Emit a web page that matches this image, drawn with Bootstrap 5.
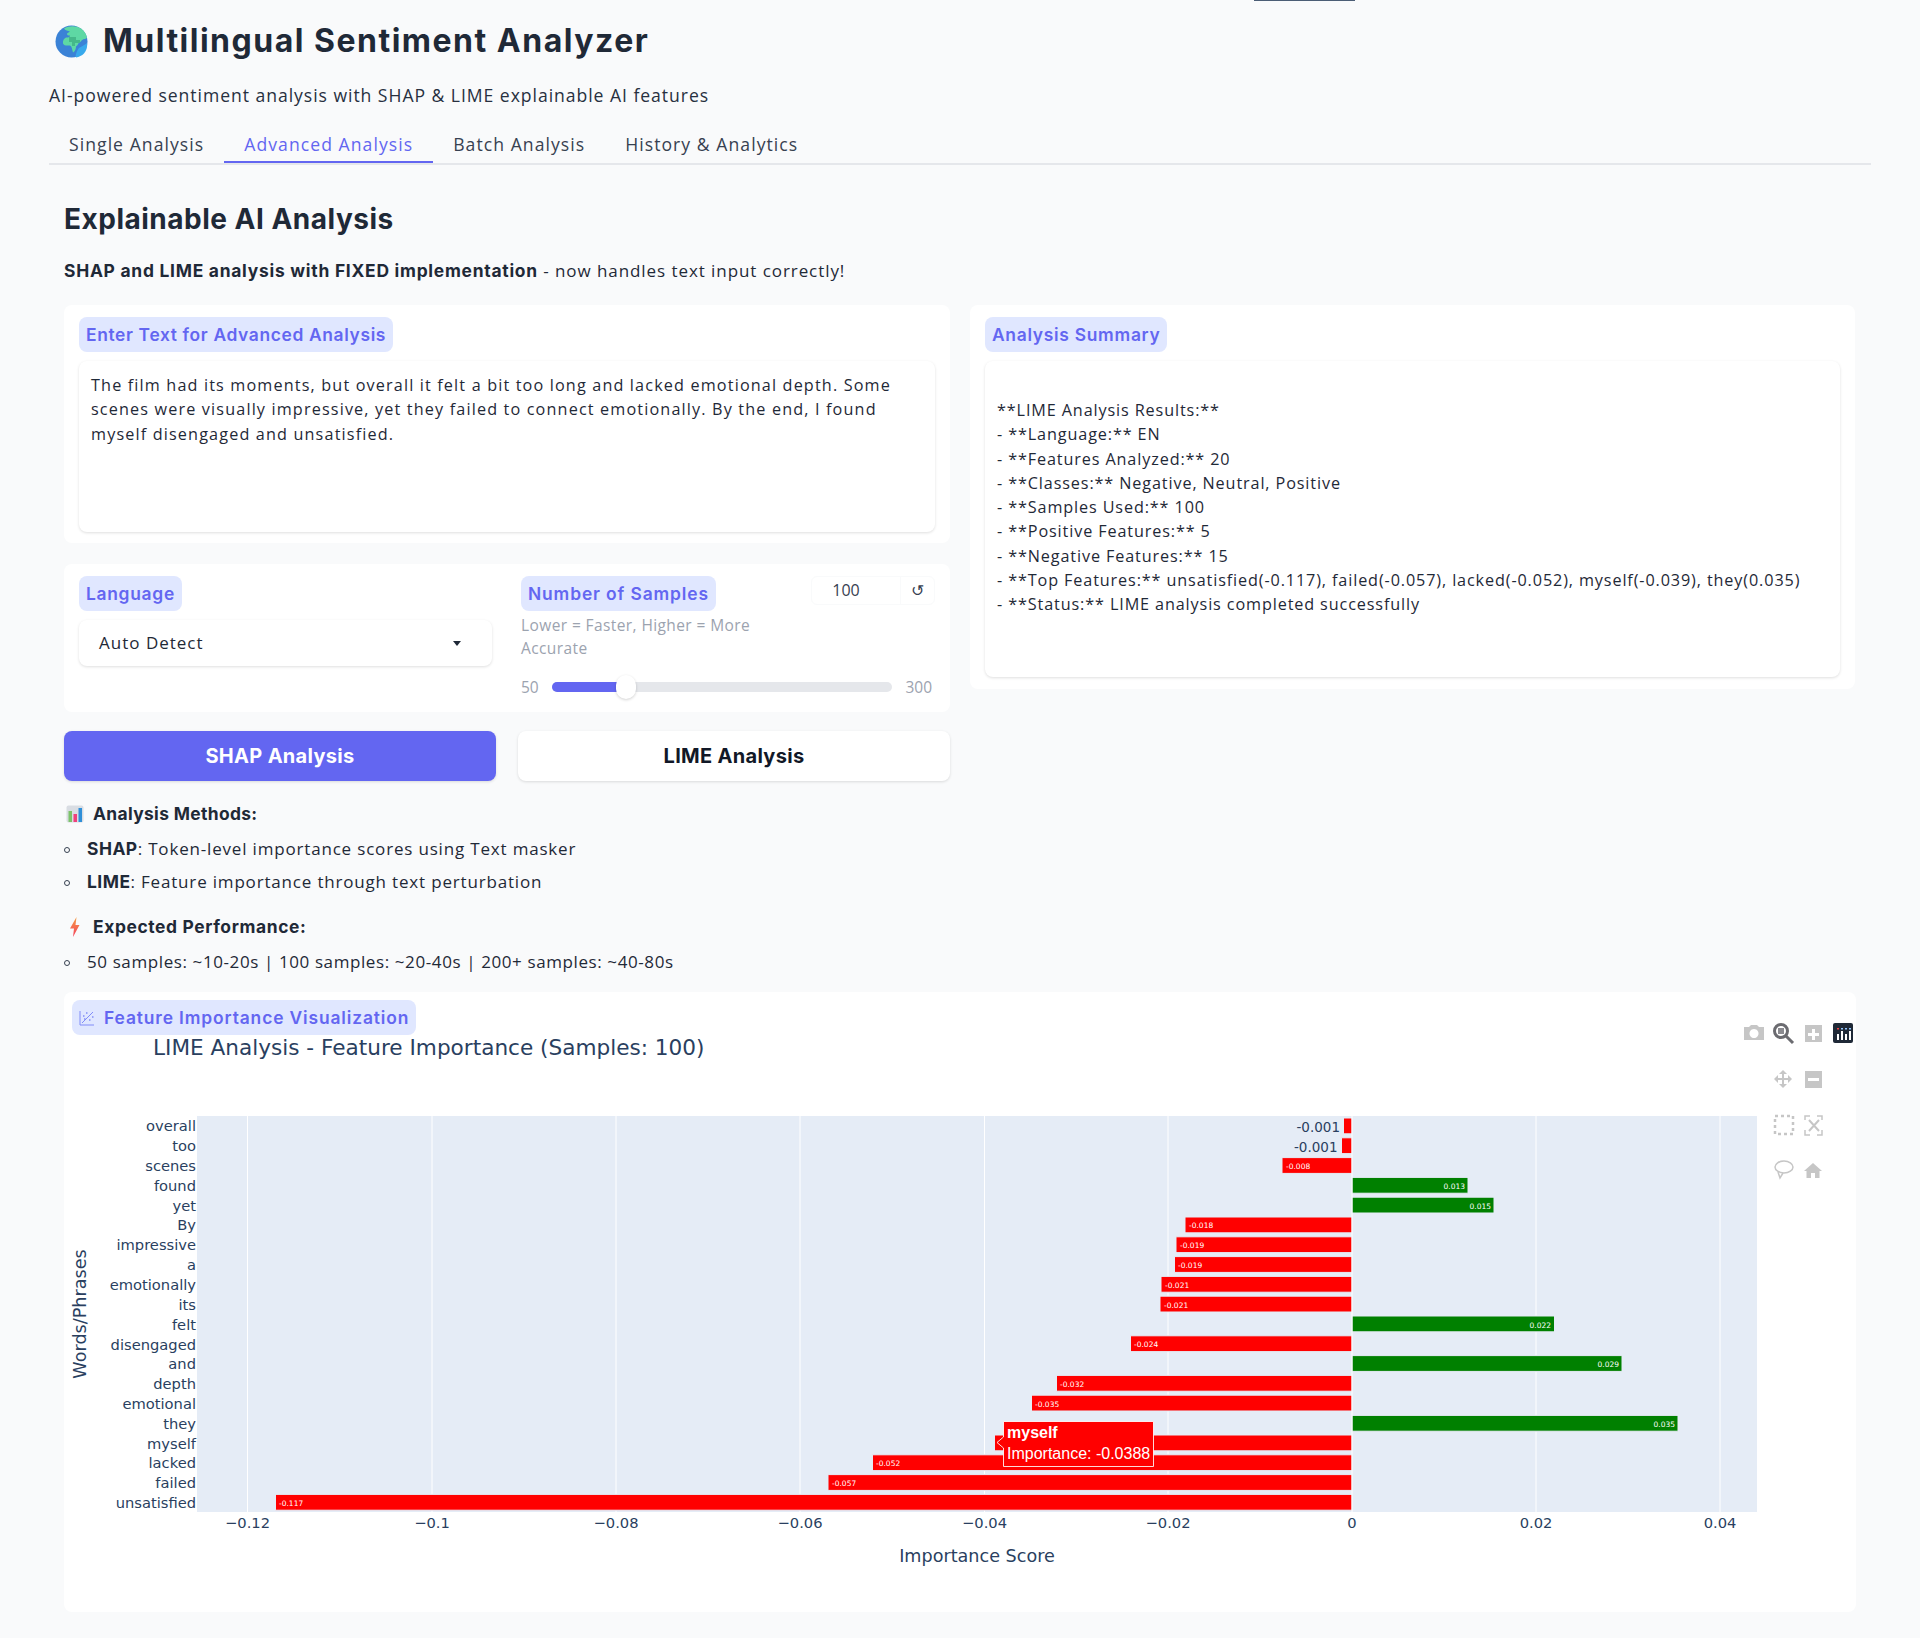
<!DOCTYPE html>
<html lang="en">
<head>
<meta charset="utf-8">
<title>Multilingual Sentiment Analyzer</title>
<link href="https://cdn.jsdelivr.net/npm/bootstrap@5.3.0/dist/css/bootstrap.min.css" rel="stylesheet">
<style>
html,body{background:#f9fafb;}
body{margin:0;height:1638px;overflow:hidden;font-family:"Open Sans",sans-serif;color:#1f2937;font-size:16px;line-height:24.3px;}
.topmark{position:absolute;left:1254px;top:0;width:101px;height:1px;background:#4b5d75;}
.shell{padding:0 49px;}
.head-row{height:82px;padding-left:6px;gap:15px;}
.app-title{font-family:"Inter",sans-serif;font-weight:700;font-size:32px;letter-spacing:1.5px;margin:0;line-height:82px;color:#1f2937;}
.app-sub{font-size:17.6px;line-height:24px;margin:0;height:48px;padding-top:1px;letter-spacing:.95px;color:#27303f;}
.tabbar{height:35px;border-bottom:2px solid #e5e7eb;}
.tabitem{padding:0 20px;height:33px;line-height:28px;font-size:17.6px;letter-spacing:1.05px;color:#374151;}
.tabitem.on{color:#6366f1;border-bottom:2px solid #6366f1;}
.content{padding:0 15px;}
.sec-title{font-family:"Inter",sans-serif;font-weight:700;font-size:28px;letter-spacing:.5px;line-height:36px;margin:0;padding-top:36px;color:#1f2937;}
.intro{margin:0;padding-top:22px;height:68px;font-size:17px;letter-spacing:.93px;}
.intro b{font-family:"Inter",sans-serif;font-weight:700;font-size:17.4px;letter-spacing:.75px;}
.cols{display:grid;grid-template-columns:886px 885px;column-gap:20px;align-items:start;}
.pane{background:#fff;border-radius:8px;padding:12px 15px;}
.tag{display:inline-block;background:#e0e7ff;color:#6366f1;font-family:"Inter",sans-serif;font-weight:600;font-size:17.4px;letter-spacing:.72px;line-height:35px;height:35px;padding:0 7px;border-radius:8px;}
.tag-tight{letter-spacing:.65px;}
.tag-wide{letter-spacing:.88px;}
.inbox{background:#fff;border-radius:8px;box-shadow:0 1px 3px rgba(0,0,0,.13);margin-top:9px;padding:12px;}
.pane-text{height:238px;}
.pane-text .inbox{height:171px;font-size:16.2px;letter-spacing:1.15px;}
.pane-opts{margin-top:21px;height:148px;padding-top:12px;display:grid;grid-template-columns:413px 414px;column-gap:29px;}
.pane-sum{height:384px;margin-top:0;}
.pane-sum .inbox{height:316px;padding-top:37px;font-size:16.2px;letter-spacing:.88px;}
.select-box{height:46px;padding:0 20px;font-size:17px;letter-spacing:1px;}
.caret-tri{width:0;height:0;border-left:4px solid transparent;border-right:4px solid transparent;border-top:5px solid #1f2937;margin-right:11px;}
.num-box{width:124px;height:29px;border:1px solid #f9fafb;border-radius:6px;font-size:16px;}
.num-val{flex:1;text-align:center;padding-right:20px;color:#374151;line-height:27px;}
.num-reset{width:34px;border-left:1px solid #f9fafb;text-align:center;line-height:27px;color:#374151;}
.hint{color:#9ca3af;font-size:15.5px;letter-spacing:.4px;line-height:23px;margin-top:3px;width:250px;height:63px;}
.range-row{gap:13px;color:#9ca3af;font-size:15.5px;line-height:20px;padding-right:3px;}
.range-track{flex:1;height:10px;background:#e5e7eb;border-radius:5px;position:relative;}
.range-fill{position:absolute;left:0;top:0;bottom:0;width:66px;background:#6366f1;border-radius:5px 0 0 5px;}
.range-thumb{position:absolute;left:64px;top:-7px;width:20px;height:24px;border-radius:10px;background:#fff;box-shadow:0 1px 3px rgba(0,0,0,.18);}
.act-row{display:grid;grid-template-columns:432px 432px;column-gap:22px;width:886px;margin-top:19px;}
.act{height:50px;border-radius:8px;font-family:"Inter",sans-serif;font-weight:700;font-size:20px;letter-spacing:.3px;border:0;box-shadow:0 1px 3px rgba(0,0,0,.13);padding:0;}
.act-a,.act-a:hover{background:#6366f1;color:#fff;}
.act-b,.act-b:hover{background:#fff;color:#111827;}
.notes{padding-top:21px;height:211px;font-size:17px;line-height:24px;letter-spacing:.82px;}
.notes .note-h{font-family:"Inter",sans-serif;font-weight:700;font-size:17.4px;letter-spacing:.35px;display:flex;align-items:center;gap:9px;padding-left:2px;}
.notes ul{list-style:none;margin:11px 0 0;padding:0;}
.notes li{position:relative;padding-left:23px;margin-bottom:9px;}
.notes li::before{content:"";position:absolute;left:0;top:10px;width:6px;height:6px;border:1px solid #374151;border-radius:50%;}
.notes li b{font-family:"Inter",sans-serif;font-weight:700;font-size:17.4px;letter-spacing:.5px;}
.notes .note-gap{margin-top:21px;letter-spacing:.62px;}
.notes .perf{letter-spacing:.6px;}
.pane-chart{position:relative;height:620px;padding:0;}
.pane-chart .tag{position:absolute;left:8px;top:8px;display:flex;align-items:center;gap:9px;}
.pane-chart svg.plot{display:block;}
.plot text{font-family:"DejaVu Sans",sans-serif;fill:#2a3f5f;}
.plot .tk{font-size:14.7px;}
.plot .ttl{font-size:21.6px;}
.plot .axt{font-size:17.6px;}
.plot .val{font-size:13.500px;}
.plot .lbl{font-size:7.5px;fill:#fff;}
.plot .tip{font-family:"Liberation Sans",Arial,sans-serif;fill:#fff;font-size:16px;}
.plot .tipb{font-weight:700;}
.plot .mb{fill:#c6c6c6;}
</style>
</head>
<body>
<div class="topmark"></div>
<div class="shell">
  <div class="d-flex align-items-center head-row">
    <svg width="33" height="33" viewBox="0 0 33 33" aria-hidden="true"><circle cx="16.500" cy="16.500" r="16" fill="#3b82d6"/><path d="M24 23c3-2 6-3 8-5 .6 4-.6 8-3 10.500-2 2-5 3.500-8 4-1-2 1-7 3-9.500z" fill="#38a9ec"/><path d="M9 3.500c5-3 12-3 17 0 3 2 5 5 6 9-1 2-3 1-4 2-2 .5-2 3-4 3-1 1-1 3-3 4 0 2-1 5-3 6-1-3-1-6-3-7-3 0-6 .5-7-2-.5-3 1-5 3-6 2 0 4 0 4-2-2 0-3 0-3-2 1-1 2-1 3-2-2-.5-5-1-6-3z" fill="#5ed8a4"/><path d="M14 12h7v3h4v3h-5v3h-3v-4h-3z" fill="#45b88a"/></svg>
    <h1 class="app-title">Multilingual Sentiment Analyzer</h1>
  </div>
  <p class="app-sub">AI-powered sentiment analysis with SHAP &amp; LIME explainable AI features</p>
  <div class="d-flex tabbar">
    <div class="tabitem">Single Analysis</div>
    <div class="tabitem on">Advanced Analysis</div>
    <div class="tabitem">Batch Analysis</div>
    <div class="tabitem">History &amp; Analytics</div>
  </div>
  <div class="content">
    <h2 class="sec-title">Explainable AI Analysis</h2>
    <p class="intro"><b>SHAP and LIME analysis with FIXED implementation</b> - now handles text input correctly!</p>
    <div class="cols">
      <div>
        <div class="pane pane-text">
          <span class="tag tag-tight">Enter Text for Advanced Analysis</span>
          <div class="inbox">The film had its moments, but overall it felt a bit too long and lacked emotional depth. Some scenes were visually impressive, yet they failed to connect emotionally. By the end, I found myself disengaged and unsatisfied.</div>
        </div>
        <div class="pane pane-opts">
          <div>
            <span class="tag">Language</span>
            <div class="inbox select-box d-flex align-items-center justify-content-between"><span>Auto Detect</span><span class="caret-tri"></span></div>
          </div>
          <div>
            <div class="d-flex justify-content-between align-items-start">
              <span class="tag tag-wide">Number of Samples</span>
              <div class="num-box d-flex"><span class="num-val">100</span><span class="num-reset">↺</span></div>
            </div>
            <div class="hint">Lower = Faster, Higher = More Accurate</div>
            <div class="d-flex align-items-center range-row"><span>50</span><div class="range-track"><div class="range-fill"></div><div class="range-thumb"></div></div><span>300</span></div>
          </div>
        </div>
        <div class="act-row">
          <button type="button" class="btn act act-a">SHAP Analysis</button>
          <button type="button" class="btn act act-b">LIME Analysis</button>
        </div>
      </div>
      <div class="pane pane-sum">
        <span class="tag">Analysis Summary</span>
        <div class="inbox">**LIME Analysis Results:**<br>- **Language:** EN<br>- **Features Analyzed:** 20<br>- **Classes:** Negative, Neutral, Positive<br>- **Samples Used:** 100<br>- **Positive Features:** 5<br>- **Negative Features:** 15<br>- **Top Features:** unsatisfied(-0.117), failed(-0.057), lacked(-0.052), myself(-0.039), they(0.035)<br>- **Status:** LIME analysis completed successfully</div>
      </div>
    </div>
    <div class="notes">
      <div class="note-h"><svg width="18" height="18" viewBox="0 0 18 18" aria-hidden="true"><rect x="0.500" y="0.500" width="17" height="17" rx="2" fill="#d9dde3"/><rect x="2.500" y="6" width="3.500" height="11" fill="#7cc36a"/><rect x="7.500" y="9" width="3.500" height="8" fill="#f0407c"/><rect x="12.500" y="3" width="3.500" height="14" fill="#2f8fd8"/></svg><span>Analysis Methods:</span></div>
      <ul>
        <li><b>SHAP</b>: Token-level importance scores using Text masker</li>
        <li><b>LIME</b>: Feature importance through text perturbation</li>
      </ul>
      <div class="note-h note-gap"><svg width="18" height="20" viewBox="0 0 18 20" aria-hidden="true"><defs><linearGradient id="bolt" x1="0" y1="0" x2="0" y2="1"><stop offset="0" stop-color="#f59e42"/><stop offset="1" stop-color="#f43f5e"/></linearGradient></defs><path d="M10.500 0 4 11.500h4L7 20l6.500-12H9.500z" fill="url(#bolt)"/></svg><span>Expected Performance:</span></div>
      <ul>
        <li class="perf">50 samples: ~10-20s | 100 samples: ~20-40s | 200+ samples: ~40-80s</li>
      </ul>
    </div>
    <div class="pane pane-chart">
      <span class="tag tag-wide"><svg width="16" height="16" viewBox="0 0 16 16" fill="none" stroke="#818cf8" aria-hidden="true"><path d="M1 1v14h14"/><path d="M3 13 14 2"/><path d="M4 6h1.500M7 3h1.500M10 10h1.500M13 7h1.500M5 9h1.500" stroke-width="1.500"/></svg><span>Feature Importance Visualization</span></span>
      <svg class="plot" width="1791" height="618" viewBox="64 992 1791 618" xmlns="http://www.w3.org/2000/svg">
        <text class="ttl" x="153" y="1055">LIME Analysis - Feature Importance (Samples: 100)</text>
        <rect x="197" y="1116" width="1560" height="396" fill="#e5ecf6"/>
        <g stroke="#fff" stroke-width="1">
          <path d="M247.500 1116v396M432 1116v396M616 1116v396M800 1116v396M984.500 1116v396M1168 1116v396M1536 1116v396M1720 1116v396"/>
        </g>
        <g fill="#f00" stroke="#e5ecf6" stroke-width="1">
          <rect x="1343.500" y="1118" width="8.500" height="15.800"/>
          <rect x="1341.500" y="1137.800" width="10.500" height="15.800"/>
          <rect x="1282" y="1157.600" width="70" height="15.800"/>
          <rect x="1185" y="1217" width="167" height="15.800"/>
          <rect x="1176" y="1236.800" width="176" height="15.800"/>
          <rect x="1174.500" y="1256.600" width="177.500" height="15.800"/>
          <rect x="1161" y="1276.400" width="191" height="15.800"/>
          <rect x="1160" y="1296.200" width="192" height="15.800"/>
          <rect x="1130.500" y="1335.800" width="221.500" height="15.800"/>
          <rect x="1056.500" y="1375.400" width="295.500" height="15.800"/>
          <rect x="1031.500" y="1395.200" width="320.500" height="15.800"/>
          <rect x="994.500" y="1435" width="357.500" height="15.800"/>
          <rect x="872.500" y="1454.800" width="479.500" height="15.800"/>
          <rect x="828" y="1474.600" width="524" height="15.800"/>
          <rect x="275.500" y="1494.400" width="1076.500" height="15.800"/>
        </g>
        <g fill="#008000" stroke="#e5ecf6" stroke-width="1">
          <rect x="1352" y="1177.400" width="116" height="15.800"/>
          <rect x="1352" y="1197.200" width="142" height="15.800"/>
          <rect x="1352" y="1316" width="202.500" height="15.800"/>
          <rect x="1352" y="1355.600" width="270" height="15.800"/>
          <rect x="1352" y="1415.400" width="326" height="15.800"/>
        </g>
        <path d="M1352 1116v396" stroke="#fff" stroke-width="1"/>
        <g class="tk" text-anchor="end">
          <text x="196" y="1131">overall</text><text x="196" y="1151">too</text><text x="196" y="1171">scenes</text><text x="196" y="1190.500">found</text><text x="196" y="1210.500">yet</text><text x="196" y="1230">By</text><text x="196" y="1250">impressive</text><text x="196" y="1270">a</text><text x="196" y="1290">emotionally</text><text x="196" y="1310">its</text><text x="196" y="1329.500">felt</text><text x="196" y="1349.500">disengaged</text><text x="196" y="1369">and</text><text x="196" y="1389">depth</text><text x="196" y="1409">emotional</text><text x="196" y="1429">they</text><text x="196" y="1448.500">myself</text><text x="196" y="1468">lacked</text><text x="196" y="1488">failed</text><text x="196" y="1508">unsatisfied</text>
        </g>
        <g class="tk" text-anchor="middle">
          <text x="247.500" y="1528">−0.12</text><text x="432" y="1528">−0.1</text><text x="616" y="1528">−0.08</text><text x="800" y="1528">−0.06</text><text x="984.500" y="1528">−0.04</text><text x="1168" y="1528">−0.02</text><text x="1352" y="1528">0</text><text x="1536" y="1528">0.02</text><text x="1720" y="1528">0.04</text>
        </g>
        <text class="axt" x="977" y="1562" text-anchor="middle">Importance Score</text>
        <text class="axt" transform="translate(86 1314) rotate(-90)" text-anchor="middle">Words/Phrases</text>
        <g class="val" text-anchor="end"><text x="1340" y="1132">-0.001</text><text x="1337.500" y="1152">-0.001</text></g>
        <g>
          <text class="lbl" x="1286" y="1169">-0.008</text>
          <text class="lbl" x="1189" y="1228">-0.018</text>
          <text class="lbl" x="1180" y="1248">-0.019</text>
          <text class="lbl" x="1178" y="1268">-0.019</text>
          <text class="lbl" x="1165" y="1288">-0.021</text>
          <text class="lbl" x="1164" y="1308">-0.021</text>
          <text class="lbl" x="1134" y="1347">-0.024</text>
          <text class="lbl" x="1060" y="1387">-0.032</text>
          <text class="lbl" x="1035" y="1407">-0.035</text>
          <text class="lbl" x="876" y="1466">-0.052</text>
          <text class="lbl" x="832" y="1486">-0.057</text>
          <text class="lbl" x="279" y="1506">-0.117</text>
          <text class="lbl" x="1465" y="1189" text-anchor="end">0.013</text>
          <text class="lbl" x="1491" y="1208.500" text-anchor="end">0.015</text>
          <text class="lbl" x="1551" y="1327.500" text-anchor="end">0.022</text>
          <text class="lbl" x="1619" y="1367" text-anchor="end">0.029</text>
          <text class="lbl" x="1675" y="1427" text-anchor="end">0.035</text>
        </g>
        <path d="M1003.500 1421.500H1153.500V1466.500H1003.500V1448L997 1442.500L1003.500 1437Z" fill="#f00" stroke="#fff" stroke-opacity=".85" stroke-width="1"/>
        <text class="tip tipb" x="1007" y="1438">myself</text>
        <text class="tip" x="1007" y="1459">Importance: -0.0388</text>
        <g>
          <path class="mb" d="M1744 1027h5l2-2h6l2 2h5v13h-20zM1754 1029a4.500 4.500 0 1 0 .01 0z" fill-rule="evenodd"/>
          <circle cx="1781" cy="1031" r="6.500" fill="none" stroke="#6b6b70" stroke-width="3"/><rect x="1778" y="1028" width="6" height="6" fill="#8a8a8f"/><path d="M1786 1036l7 7" stroke="#6b6b70" stroke-width="3"/>
          <path class="mb" d="M1805 1025h17v17h-17zM1812 1029v4h-4v3h4v4h3v-4h4v-3h-4v-4z" fill-rule="evenodd"/>
          <rect x="1833" y="1023" width="20" height="20" rx="2" fill="#1f2937"/><path d="M1837 1034h2v6h-2zM1841 1031h2v9h-2zM1845 1034h2v6h-2zM1849 1031h2v9h-2z" fill="#fff"/><path d="M1837 1028h2v1.500h-2z" fill="#ef4444"/><path d="M1841 1028h2v1.500h-2zM1845 1028h2v1.500h-2zM1849 1028h2v1.500h-2z" fill="#93c5fd"/>
          <path class="mb" d="M1783 1070l4 4h-3v4h4v-3l4 4-4 4v-3h-4v4h3l-4 4-4-4h3v-4h-4v3l-4-4 4-4v3h4v-4h-3z"/>
          <path class="mb" d="M1805 1071h17v17h-17zM1808 1078v3h11v-3z" fill-rule="evenodd"/>
          <path d="M1775 1116h18v18h-18z" fill="none" stroke="#c6c6c6" stroke-width="2.500" stroke-dasharray="3 3"/>
          <path d="M1805 1120v-4h5M1817 1116h5v4M1822 1130v5h-5M1810 1135h-5v-5" fill="none" stroke="#c6c6c6" stroke-width="1.500"/><path d="M1809 1120l10 11M1819 1120l-10 11" stroke="#c6c6c6" stroke-width="2"/>
          <ellipse cx="1784" cy="1167" rx="9" ry="6" fill="none" stroke="#c6c6c6" stroke-width="1.500"/><path d="M1778 1172l2 6 3-5" fill="none" stroke="#c6c6c6" stroke-width="1.500"/>
          <path class="mb" d="M1813 1163l9 8h-2.500v7h-4.500v-5h-4v5h-4.500v-7h-2.500z"/>
        </g>
      </svg>
    </div>
  </div>
</div>
<script src="https://cdn.jsdelivr.net/npm/bootstrap@5.3.0/dist/js/bootstrap.bundle.min.js"></script>
</body>
</html>
